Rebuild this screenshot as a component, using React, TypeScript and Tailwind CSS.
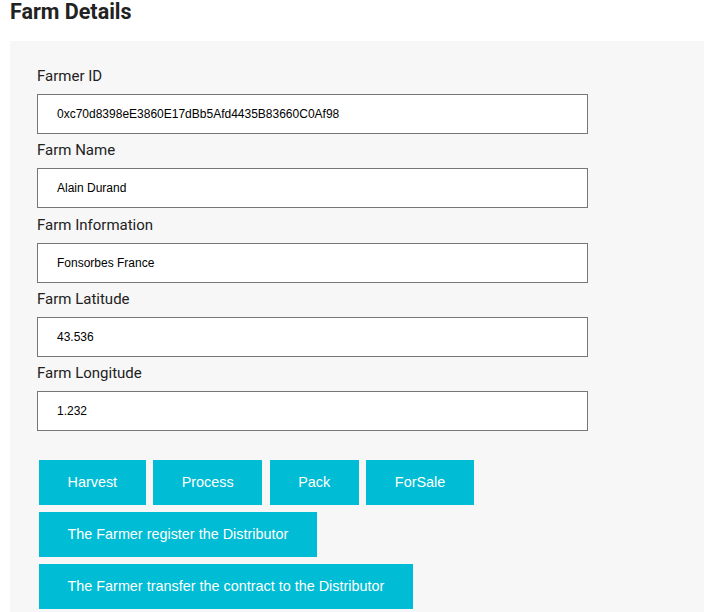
import React from "react";

const fields = [
  { label: "Farmer ID", value: "0xc70d8398eE3860E17dBb5Afd4435B83660C0Af98" },
  { label: "Farm Name", value: "Alain Durand" },
  { label: "Farm Information", value: "Fonsorbes France" },
  { label: "Farm Latitude", value: "43.536" },
  { label: "Farm Longitude", value: "1.232" },
];

function Btn({ children }: { children: React.ReactNode }) {
  return (
    <button className="h-[45px] px-[28.5px] bg-[#00bcd4] text-white text-[14.4px] leading-[17px] whitespace-nowrap font-['Liberation_Sans',Arial,sans-serif]">
      {children}
    </button>
  );
}

export default function App() {
  return (
    <div className="w-[711px] h-[612px] overflow-hidden bg-white font-['Roboto',sans-serif]">
      <h2 className="pl-[10px] pt-0 h-[41px] text-[21.5px] leading-[24px] font-bold text-[#222]">
        Farm Details
      </h2>
      <div className="ml-[10px] w-[694px] h-[600px] bg-[#f7f7f7] pt-[25px] pl-[27px]">
        {fields.map((f) => (
          <div key={f.label} className="flex flex-col">
            <label className="h-5 mb-2 text-[15px] leading-5 text-[#222]">{f.label}</label>
            <input
              readOnly
              value={f.value}
              className="w-[551px] h-[40px] mb-[6.3px] bg-white border border-[#767676] pl-[19px] text-[12px] text-black font-['Liberation_Sans',Arial,sans-serif] outline-none"
            />
          </div>
        ))}
        <div className="mt-[23px] ml-[2px] flex flex-col gap-[7px]">
          <div className="flex gap-[7.6px]">
            <Btn>Harvest</Btn>
            <Btn>Process</Btn>
            <Btn>Pack</Btn>
            <Btn>ForSale</Btn>
          </div>
          <div className="flex">
            <Btn>The Farmer register the Distributor</Btn>
          </div>
          <div className="flex">
            <Btn>The Farmer transfer the contract to the Distributor</Btn>
          </div>
        </div>
      </div>
    </div>
  );
}
